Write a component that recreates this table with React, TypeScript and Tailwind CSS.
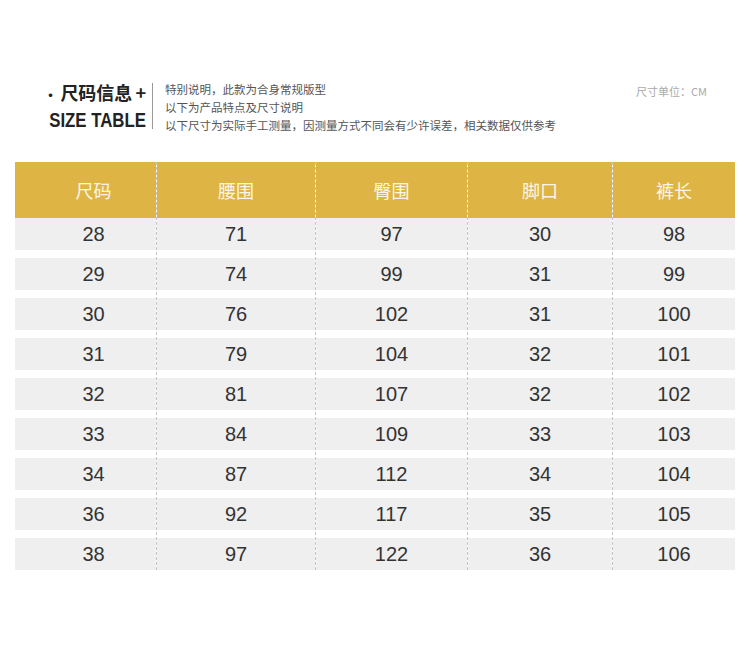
import React from 'react';

const columns = [
  { title: '尺码', width: 'w-[141px]', pad: 'pl-[16px]' },
  { title: '腰围', width: 'w-[159px]', pad: '' },
  { title: '臀围', width: 'w-[152px]', pad: '' },
  { title: '脚口', width: 'w-[145px]', pad: '' },
  { title: '裤长', width: 'w-[123px]', pad: '' },
];

const rows = [
  [28, 71, 97, 30, 98],
  [29, 74, 99, 31, 99],
  [30, 76, 102, 31, 100],
  [31, 79, 104, 32, 101],
  [32, 81, 107, 32, 102],
  [33, 84, 109, 33, 103],
  [34, 87, 112, 34, 104],
  [36, 92, 117, 35, 105],
  [38, 97, 122, 36, 106],
];

const cjk = "font-['Noto_Sans_CJK_SC',sans-serif]";

export default function App() {
  return (
    <div className="w-[750px] h-[671px] bg-white overflow-hidden">
      {/* Title block */}
      <div className="flex items-start pt-[78px] px-[15px] h-[162px]">
        <div className="flex flex-col items-end w-[131px]">
          <p className={`${cjk} text-[18px] leading-[28px] font-bold text-[#222] whitespace-nowrap`}>
            <span className="text-[14px] mr-[3px]">·</span>尺码信息<span className="ml-[3px]">+</span>
          </p>
          <p className="font-['Liberation_Sans',sans-serif] text-[21px] leading-[24px] font-bold text-[#222] whitespace-nowrap scale-x-[0.8] origin-right">
            SIZE TABLE
          </p>
        </div>
        <div className="w-px h-[46px] bg-[#999] ml-[6px] mt-[5px]" />
        <div className={`${cjk} ml-[12px] mt-[2px] text-[11.5px] leading-[18px] text-[#555]`}>
          <p>特别说明，此款为合身常规版型</p>
          <p>以下为产品特点及尺寸说明</p>
          <p>以下尺寸为实际手工测量，因测量方式不同会有少许误差，相关数据仅供参考</p>
        </div>
        <p className={`${cjk} ml-auto mr-[28px] mt-[4px] text-[11px] leading-[18px] text-[#aaa] whitespace-nowrap`}>
          尺寸单位：CM
        </p>
      </div>

      {/* Size table */}
      <div className="flex mx-[15px]">
        {columns.map((col, ci) => (
          <div
            key={col.title}
            className={`${col.width} flex flex-col ${ci > 0 ? 'border-l border-dashed border-[#c4c4c4]' : ''}`}
          >
            <div className={`h-[56px] bg-[#deb545] flex items-center justify-center ${col.pad}`}>
              <span className={`${cjk} text-[18px] text-[#fdf6e4]`}>{col.title}</span>
            </div>
            <div className="flex flex-col gap-[8px]">
              {rows.map((r, ri) => (
                <div
                  key={ri}
                  className={`h-[32px] bg-[#efefef] flex items-center justify-center ${col.pad}`}
                >
                  <span className="font-['Liberation_Sans',sans-serif] text-[20px] text-[#333]">
                    {r[ci]}
                  </span>
                </div>
              ))}
            </div>
          </div>
        ))}
      </div>
    </div>
  );
}
